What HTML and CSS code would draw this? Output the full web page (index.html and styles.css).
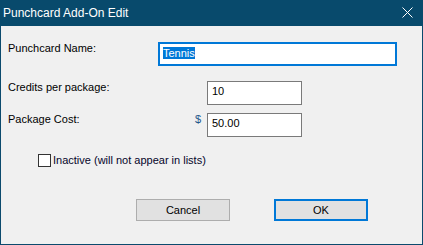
FILE: index.html
```html
<!DOCTYPE html>
<html lang="en">
<head>
  <meta charset="UTF-8">
  <title>Punchcard Add-On Edit</title>
  <link rel="stylesheet" href="styles.css">
</head>
<body>
  <div class="window">
    <div class="titlebar">
      <span class="title">Punchcard Add-On Edit</span>
      <svg class="close" width="11" height="11" viewBox="0 0 11 11">
        <path d="M0.5 0.5 L10.5 10.5 M10.5 0.5 L0.5 10.5" stroke="#fff" stroke-width="1" fill="none"/>
      </svg>
    </div>

    <div class="content">
      <div class="row">
        <span class="label">Punchcard Name:</span>
        <div class="field field-focus"><span class="selected">Tennis</span></div>
      </div>

      <div class="row row-credits">
        <span class="label">Credits per package:</span>
        <span class="prefix"></span>
        <div class="field field-small">10</div>
      </div>

      <div class="row row-cost">
        <span class="label">Package Cost:</span>
        <span class="prefix">$</span>
        <div class="field field-small">50.00</div>
      </div>

      <div class="check-row">
        <span class="checkbox"></span>
        <span class="check-label">Inactive (will not appear in lists)</span>
      </div>

      <div class="buttons">
        <button class="btn">Cancel</button>
        <button class="btn btn-default">OK</button>
      </div>
    </div>
  </div>
</body>
</html>
```

FILE: styles.css
```css
body {
  margin: 0;
  background: #f0f0f0;
  font-family: "Liberation Sans", Arial, sans-serif;
  font-size: 11px;
  line-height: 13px;
  color: #000;
}

.window {
  width: 423px;
  height: 245px;
  box-sizing: border-box;
  border: 1px solid #0b4a6d;
  border-top: none;
  background: #f0f0f0;
}

.titlebar {
  display: flex;
  align-items: center;
  height: 26px;
  margin: 0 -1px;
  padding-left: 3px;
  background: #084a6c;
  color: #fff;
}

.title {
  font-size: 12px;
  line-height: 26px;
}

.close {
  margin-left: auto;
  margin-right: 10px;
  margin-top: -1px;
}

.content {
  padding: 16px 0 0 7px;
}

.row {
  display: flex;
  align-items: flex-start;
}

.row-credits {
  margin-top: 15px;
}

.row-cost {
  margin-top: 8px;
}

.label {
  width: 150px;
  flex: none;
}

.prefix {
  width: 49px;
  box-sizing: border-box;
  padding-right: 6px;
  text-align: right;
  color: #22558a;
}

.field {
  height: 24px;
  box-sizing: border-box;
  background: #fff;
  white-space: nowrap;
}

.field-focus {
  width: 239px;
  border: 2px solid #0078d7;
  padding: 3px 3px;
}

.field-small {
  width: 95px;
  border: 1px solid #7a7a7a;
  padding: 3px 4px;
}

.selected {
  background: #0078d7;
  color: #fff;
}

.check-row {
  display: flex;
  align-items: center;
  margin-top: 17px;
  padding-left: 30px;
}

.checkbox {
  width: 13px;
  height: 13px;
  box-sizing: border-box;
  border: 1px solid #333;
  background: #fff;
  margin-right: 2px;
}

.check-label {
  color: #05052a;
}

.buttons {
  display: flex;
  gap: 44px;
  margin-top: 32px;
  padding-left: 128px;
}

.btn {
  width: 94px;
  height: 22px;
  box-sizing: border-box;
  margin: 0;
  padding: 0;
  font: inherit;
  color: #000;
  background: #e1e1e1;
  border: 1px solid #adadad;
}

.btn-default {
  border: 2px solid #0078d7;
}
```
